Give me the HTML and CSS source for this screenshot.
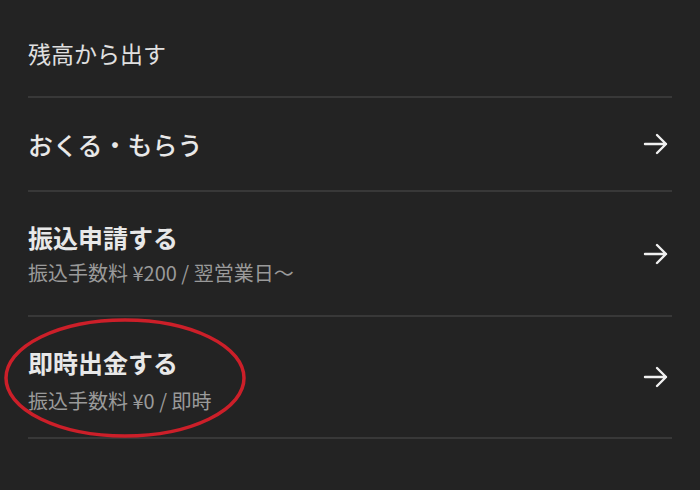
FILE: index.html
```html
<!DOCTYPE html>
<html lang="ja">
<head>
  <meta charset="UTF-8" />
  <title>残高から出す</title>
  <link rel="stylesheet" href="styles.css">
</head>
<body>
<div class="menu">
  <div class="row head">
    <span class="label">残高から出す</span>
  </div>

  <div class="row send">
    <div class="texts">
      <span class="title">おくる・もらう</span>
    </div>
    <svg class="arrow" viewBox="0 0 26 22"><path d="M2 11H23M14 2L23 11L14 20"/></svg>
  </div>

  <div class="row transfer">
    <div class="texts">
      <span class="title bold">振込申請する</span>
      <span class="sub">振込手数料 ¥200 / 翌営業日〜</span>
    </div>
    <svg class="arrow" viewBox="0 0 26 22"><path d="M2 11H23M14 2L23 11L14 20"/></svg>
  </div>

  <div class="row instant">
    <div class="texts">
      <span class="title bold">即時出金する</span>
      <span class="sub">振込手数料 ¥0 / 即時</span>
    </div>
    <svg class="arrow" viewBox="0 0 26 22"><path d="M2 11H23M14 2L23 11L14 20"/></svg>
    <svg class="circle" viewBox="0 0 244 122"><ellipse cx="122" cy="61" rx="119" ry="58"/></svg>
  </div>
</div>
</body>
</html>
```

FILE: styles.css
```css
body {
  margin: 0;
  background-color: #232323;
  font-family: "Noto Sans CJK JP", "Noto Sans", sans-serif;
  color: #e8e8e8;
  height: 490px;
  overflow: hidden;
}

.menu {
  padding: 0 28px;
}

.row {
  display: flex;
  align-items: center;
  justify-content: space-between;
  border-bottom: 2px solid #383838;
  position: relative;
}

.head {
  height: 98px;
  padding-top: 10px;
  box-sizing: border-box;
}

.label {
  font-size: 23px;
  color: #e0e0e0;
}

.send {
  height: 92px;
}

.transfer {
  height: 123px;
}

.instant {
  height: 120px;
}

.texts {
  display: flex;
  flex-direction: column;
}

.title {
  font-size: 25px;
  font-weight: 500;
  line-height: 34px;
}

.title.bold {
  font-weight: 700;
}

.sub {
  font-size: 20px;
  color: #9a9a9a;
  line-height: 30px;
  margin-top: 4px;
}

.transfer .texts {
  margin-top: 1px;
}

.instant .texts {
  margin-top: 6px;
}

.instant .sub {
  margin-top: 7px;
}

.arrow {
  width: 26px;
  height: 22px;
  margin-right: 3px;
  fill: none;
  stroke: #f0f0f0;
  stroke-width: 2.4;
  stroke-linecap: round;
  stroke-linejoin: round;
}

.circle {
  position: absolute;
  left: -25px;
  top: 0;
  width: 244px;
  height: 122px;
  fill: none;
  stroke: #cc1f29;
  stroke-width: 3.5;
  overflow: visible;
}
```
